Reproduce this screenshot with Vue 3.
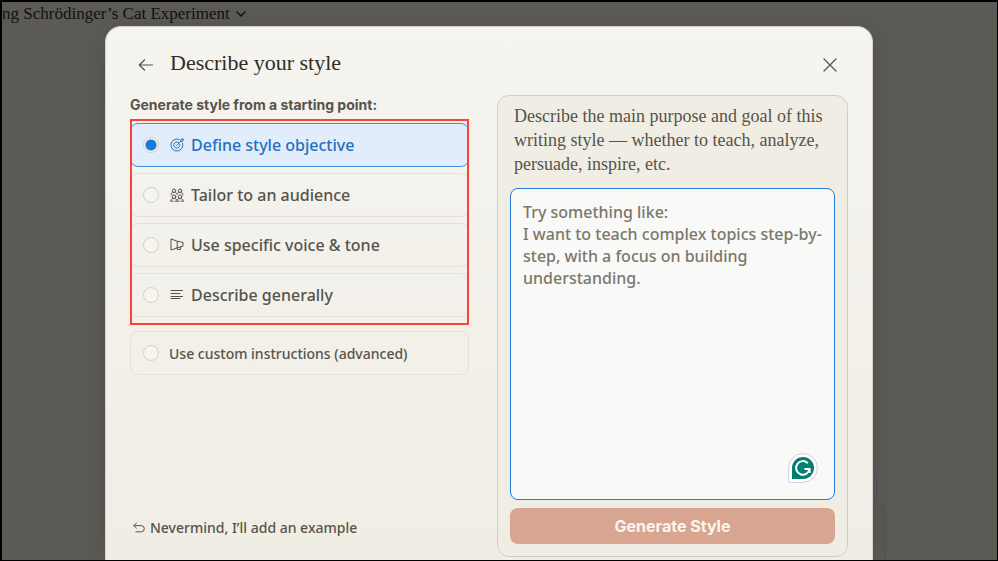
<script setup>
import { ref } from 'vue'

const selected = ref('objective')
const description = ref('')
const options = [
  { id: 'objective', label: 'Define style objective' },
  { id: 'audience', label: 'Tailor to an audience' },
  { id: 'voice', label: 'Use specific voice & tone' },
  { id: 'general', label: 'Describe generally' },
]
const hint =
  'Try something like:\nI want to teach complex topics step-by-step, with a focus on building understanding.'
</script>

<template>
  <div class="screen">
    <header class="topbar">
      <span class="chat-title">ng Schrödinger’s Cat Experiment</span>
      <svg class="chevron" viewBox="0 0 10 10" aria-hidden="true"><path d="M1 3l4 4 4-4" /></svg>
    </header>
    <div class="composer-tab"></div>
    <div class="composer"></div>

    <main class="dialog" role="dialog" aria-labelledby="dialog-title">
      <div class="dialog-head">
        <button class="icon-button" type="button" aria-label="Back">
          <svg class="arrow" viewBox="0 0 16 16"><path d="M14.5 8H1.5M6.5 3L1.2 8l5.3 5" /></svg>
        </button>
        <h1 id="dialog-title">Describe your style</h1>
        <button class="icon-button close" type="button" aria-label="Close">
          <svg viewBox="0 0 14 14"><path d="M1 1l12 12M13 1L1 13" /></svg>
        </button>
      </div>

      <div class="dialog-body">
        <section class="choices">
          <h2>Generate style from a starting point:</h2>
          <div class="group">
            <label
              v-for="option in options"
              :key="option.id"
              class="option"
              :class="{ active: selected === option.id }"
            >
              <input v-model="selected" type="radio" name="start" :value="option.id" />
              <svg v-if="option.id === 'objective'" class="glyph" viewBox="0 0 14 14" aria-hidden="true">
                <path d="M9.2 1.4A6 6 0 1 0 12.6 5M8.3 4.3A3.1 3.1 0 1 0 9.8 6.2M6.8 7.4l4-4.2M10.8 3.2V1.8L12.4.4v1.4h1.4l-1.5 1.4z" />
              </svg>
              <svg v-else-if="option.id === 'audience'" class="glyph" viewBox="0 0 14 14" aria-hidden="true">
                <circle cx="4" cy="2.7" r="1.7" />
                <circle cx="10" cy="2.7" r="1.7" />
                <circle cx="4" cy="8.7" r="1.8" />
                <circle cx="10" cy="8.7" r="1.8" />
                <path d="M1 6.8c0-1.6 1-2.4 2.5-2.4M13 6.8c0-1.6-1-2.4-2.5-2.4M5 4.5c1 0 2 .7 2 1.8 0-1.1 1-1.8 2-1.8M.9 13.2V12.6c0-1.3 1.3-2.1 3.1-2.1s3 .8 3 2.1c0-1.3 1.2-2.1 3-2.1s3.1.8 3.1 2.1v.6M.9 13.2h2.3M5 13.2h4M11 13.2h2.1" />
              </svg>
              <svg v-else-if="option.id === 'voice'" class="glyph" viewBox="0 0 14 14" aria-hidden="true">
                <path d="M1 1.3V12l6-2.1 6-1.8V4.4L7.2 3.2zM7.2 3.2v6.7M7.2 10v1.4h3.4V9" />
              </svg>
              <svg v-else class="glyph" viewBox="0 0 14 14" aria-hidden="true">
                <path d="M1 2.5h11.5M1 5.5h9M1 8.5h11.5M1 10.5h9" />
              </svg>
              <span>{{ option.label }}</span>
            </label>
            <div class="highlight"></div>
          </div>
          <label class="option custom" :class="{ active: selected === 'custom' }">
            <input v-model="selected" type="radio" name="start" value="custom" />
            <span>Use custom instructions (advanced)</span>
          </label>
          <button class="undo" type="button">
            <svg viewBox="0 0 12 12" aria-hidden="true"><path d="M3.5 1L.8 3.6l2.7 2.7M.9 3.6h7.3a3.1 3.1 0 0 1 0 6.2H2.8" /></svg>
            Nevermind, I’ll add an example
          </button>
        </section>

        <section class="panel">
          <label class="prompt" for="style-description">
            Describe the main purpose and goal of this writing style — whether to teach, analyze,
            persuade, inspire, etc.
          </label>
          <div class="field">
            <textarea id="style-description" v-model="description" :placeholder="hint"></textarea>
            <svg class="badge" viewBox="0 0 30 30" aria-hidden="true">
              <path class="badge-rim" d="M.6 29.4V15A14.4 14.4 0 1 1 15 29.4z" />
              <path class="badge-fill" d="M4 26V15a11 11 0 1 1 11 11z" />
              <path class="badge-mark" d="M19.8 10.2A6.8 6.8 0 1 0 21.6 16H16.4M21.7 15.4V20" />
            </svg>
          </div>
          <button class="generate" type="button">Generate Style</button>
        </section>
      </div>
    </main>
  </div>
</template>

<style>
body {
  margin: 0;
}
</style>

<style scoped>
* {
  box-sizing: border-box;
}
.screen {
  position: relative;
  display: flex;
  flex-direction: column;
  height: 100vh;
  min-height: 480px;
  overflow: hidden;
  border: solid #000;
  border-width: 2px 1px 1px 2px;
  background: #5b5a55;
  color: #56544a;
  font-family: "Noto Sans", "Liberation Sans", sans-serif;
}
button {
  padding: 0;
  border: 0;
  background: none;
  color: inherit;
  font: inherit;
  cursor: pointer;
}
svg {
  fill: none;
  stroke: currentColor;
  stroke-linecap: round;
  stroke-linejoin: round;
}
.topbar {
  display: flex;
  flex: none;
  align-items: center;
  gap: 6px;
  height: 24px;
  color: #11110f;
  font-family: "Liberation Serif", serif;
  font-size: 17px;
  white-space: nowrap;
}
.chevron {
  width: 10px;
  height: 10px;
  stroke-width: 1.4;
}
.composer-tab,
.composer {
  position: absolute;
  bottom: -20px;
  border: 1px solid #51504c;
}
.composer-tab {
  right: 120px;
  width: 60px;
  height: 112px;
  border-color: #50506a;
  border-radius: 8px;
}
.composer {
  right: 112px;
  width: 80px;
  height: 81px;
  border-radius: 14px;
  background: #5b5a55;
}
.dialog {
  position: relative;
  display: flex;
  flex: 1;
  flex-direction: column;
  min-height: 0;
  margin: 0 124px 0 103px;
  padding: 0 24px 3px;
  border: 1px solid #d6d4c8;
  border-bottom: 0;
  border-radius: 16px 16px 0 0;
  background: linear-gradient(#f5f4ef, #f0ede5);
  box-shadow: 0 4px 24px rgba(0, 0, 0, 0.12);
}
.dialog-head {
  display: flex;
  align-items: center;
  height: 68px;
  padding: 8px 4px 0 2px;
}
.icon-button {
  display: grid;
  place-items: center;
  width: 28px;
  height: 28px;
}
.icon-button svg {
  width: 14px;
  height: 14px;
  stroke-width: 1.2;
}
.icon-button .arrow {
  width: 16px;
  height: 16px;
}
h1 {
  flex: 1;
  margin: 0 0 4px 10px;
  color: #2e2d28;
  font: 400 22px/28px "Liberation Serif", serif;
}
.dialog-body {
  display: grid;
  flex: 1;
  grid-template-columns: 339fr 351fr;
  gap: 28px;
  min-height: 0;
}
.choices {
  display: flex;
  flex-direction: column;
}
h2 {
  margin: 0 0 8px;
  font-family: Inter, "Liberation Sans", sans-serif;
  font-size: 14px;
  font-weight: 700;
  line-height: 20px;
}
.group {
  position: relative;
  display: flex;
  flex-direction: column;
  gap: 6px;
}
.highlight {
  position: absolute;
  inset: -4px 0 -8px;
  border: 2px solid #fb4238;
  pointer-events: none;
}
.option {
  display: flex;
  align-items: center;
  height: 44px;
  padding: 0 12px;
  border: 1px solid #e3e1d9;
  border-radius: 8px;
  font-size: 16px;
  font-weight: 500;
}
.option.active {
  border-color: #3f90e4;
  background: #e1edfa;
  color: #2470c2;
}
.option input {
  flex: none;
  appearance: none;
  width: 16px;
  height: 16px;
  margin: 0 10px 0 0;
  border: 1px solid #d3d1c8;
  border-radius: 50%;
  background: #f5f4ef;
}
.option input:checked {
  background: radial-gradient(circle, #1b78dc 5px, #f5f4ef 6px);
}
.glyph {
  width: 14px;
  height: 14px;
  margin: 0 7px 0 1px;
}
.option.custom {
  margin-top: 14px;
  font-size: 14px;
}
.undo {
  display: flex;
  align-items: center;
  gap: 5px;
  margin: auto 0 19px 3px;
  font-size: 14px;
  font-weight: 500;
  line-height: 20px;
}
.undo svg {
  width: 12px;
  height: 12px;
}
.panel {
  display: flex;
  flex-direction: column;
  gap: 8px;
  padding: 8px 12px 12px;
  border: 1px solid #d2cfc1;
  border-radius: 12px;
  background: #f0ede4;
}
.prompt {
  padding: 0 4px 4px;
  font: 400 18px/24px "Liberation Serif", serif;
}
.field {
  position: relative;
  display: flex;
  flex: 1;
}
textarea {
  flex: 1;
  min-width: 0;
  padding: 12px 4px 12px 12px;
  border: 1px solid #1f7bdb;
  border-radius: 8px;
  outline: 0;
  background: #f9f9f7;
  color: #3d3d3a;
  font: 500 16px/22px "Noto Sans", "Liberation Sans", sans-serif;
  resize: none;
}
textarea::placeholder {
  color: #7b786c;
  opacity: 1;
}
.badge {
  position: absolute;
  right: 17px;
  bottom: 17px;
  width: 30px;
  height: 30px;
}
.badge-rim {
  fill: #fff;
  stroke: #cfd0e0;
}
.badge-fill {
  fill: #027e6f;
  stroke: none;
}
.badge-mark {
  stroke: #fff;
  stroke-linecap: butt;
  stroke-width: 2;
}
.generate {
  height: 36px;
  border-radius: 8px;
  background: #d8a590;
  color: #faf5ef;
  font-family: Inter, "Liberation Sans", sans-serif;
  font-size: 16px;
  font-weight: 700;
}
</style>
